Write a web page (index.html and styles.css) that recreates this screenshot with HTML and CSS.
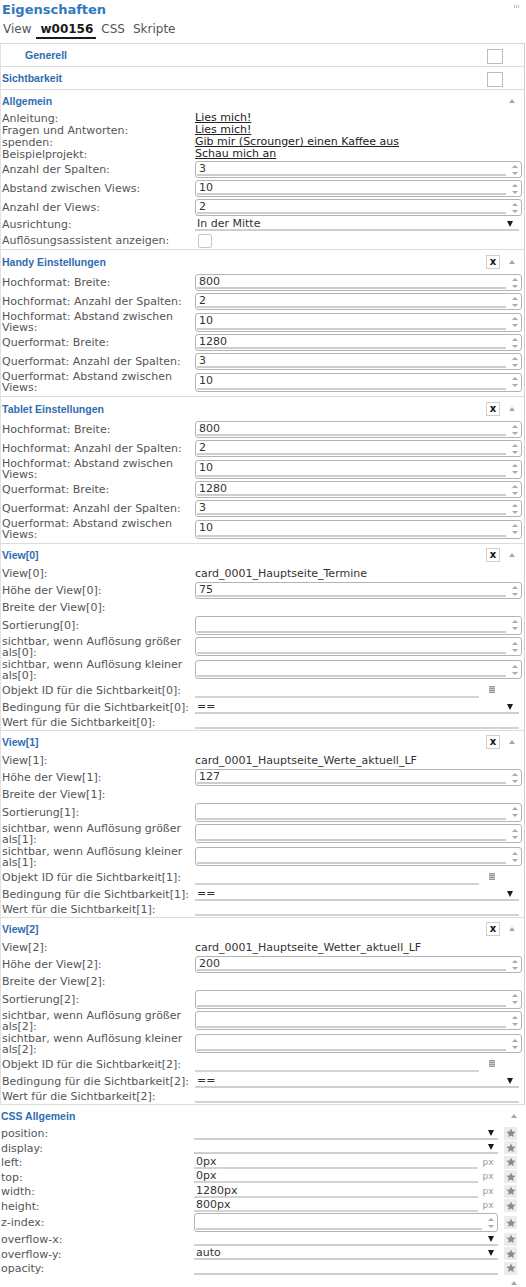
FILE: index.html
```html
<!DOCTYPE html>
<html lang="de">
<head>
<meta charset="utf-8">
<title>Eigenschaften</title>
<link rel="stylesheet" href="styles.css">
</head>
<body>
<div class="panel">
  <div class="titlebar"><h1 class="title">Eigenschaften</h1><span class="grip"></span></div>
  <div class="tabs">
    <span class="tab t-view">View</span><span class="tab active">w00156</span><span class="tab t-css">CSS</span><span class="tab t-skr">Skripte</span>
  </div>

  <div class="attrs">
    <div class="sec">
      <div class="head h22 indent"><span class="htext">Generell</span><span class="hchk"></span></div>
    </div>
    <div class="sec">
      <div class="head h22"><span class="htext">Sichtbarkeit</span><span class="hchk"></span></div>
    </div>

    <div class="sec">
      <div class="head h22"><span class="htext">Allgemein</span><span class="up"></span></div>
      <div class="row h12"><span class="lbl">Anleitung:</span><span class="link">Lies mich!</span></div>
      <div class="row h12"><span class="lbl">Fragen und Antworten:</span><span class="link">Lies mich!</span></div>
      <div class="row h12"><span class="lbl">spenden:</span><span class="link">Gib mir (Scrounger) einen Kaffee aus</span></div>
      <div class="row h12"><span class="lbl">Beispielprojekt:</span><span class="link">Schau mich an</span></div>
      <div class="row h19"><span class="lbl">Anzahl der Spalten:</span><div class="num"><span class="v">3</span><span class="spin"></span></div></div>
      <div class="row h19"><span class="lbl">Abstand zwischen Views:</span><div class="num"><span class="v">10</span><span class="spin"></span></div></div>
      <div class="row h19"><span class="lbl">Anzahl der Views:</span><div class="num"><span class="v">2</span><span class="spin"></span></div></div>
      <div class="row h15"><span class="lbl">Ausrichtung:</span><div class="sel wide"><span class="v">In der Mitte</span><span class="dn"></span></div></div>
      <div class="row h17"><span class="lbl">Auflösungsassistent anzeigen:</span><span class="chk"></span></div>
    </div>

    <div class="sec pb3">
      <div class="head h23"><span class="htext">Handy Einstellungen</span><span class="xbtn">x</span><span class="up"></span></div>
      <div class="row h19"><span class="lbl">Hochformat: Breite:</span><div class="num"><span class="v">800</span><span class="spin"></span></div></div>
      <div class="row h19"><span class="lbl">Hochformat: Anzahl der Spalten:</span><div class="num"><span class="v">2</span><span class="spin"></span></div></div>
      <div class="row h22"><span class="lbl">Hochformat: Abstand zwischen Views:</span><div class="num tall"><span class="v">10</span><span class="spin"></span></div></div>
      <div class="row h19"><span class="lbl">Querformat: Breite:</span><div class="num"><span class="v">1280</span><span class="spin"></span></div></div>
      <div class="row h19"><span class="lbl">Querformat: Anzahl der Spalten:</span><div class="num"><span class="v">3</span><span class="spin"></span></div></div>
      <div class="row h22"><span class="lbl">Querformat: Abstand zwischen Views:</span><div class="num tall"><span class="v">10</span><span class="spin"></span></div></div>
    </div>

    <div class="sec pb3">
      <div class="head h23"><span class="htext">Tablet Einstellungen</span><span class="xbtn">x</span><span class="up"></span></div>
      <div class="row h19"><span class="lbl">Hochformat: Breite:</span><div class="num"><span class="v">800</span><span class="spin"></span></div></div>
      <div class="row h19"><span class="lbl">Hochformat: Anzahl der Spalten:</span><div class="num"><span class="v">2</span><span class="spin"></span></div></div>
      <div class="row h22"><span class="lbl">Hochformat: Abstand zwischen Views:</span><div class="num tall"><span class="v">10</span><span class="spin"></span></div></div>
      <div class="row h19"><span class="lbl">Querformat: Breite:</span><div class="num"><span class="v">1280</span><span class="spin"></span></div></div>
      <div class="row h19"><span class="lbl">Querformat: Anzahl der Spalten:</span><div class="num"><span class="v">3</span><span class="spin"></span></div></div>
      <div class="row h22"><span class="lbl">Querformat: Abstand zwischen Views:</span><div class="num tall"><span class="v">10</span><span class="spin"></span></div></div>
    </div>

    <div class="sec">
      <div class="head h22"><span class="htext">View[0]</span><span class="xbtn">x</span><span class="up"></span></div>
      <div class="row h15"><span class="lbl">View[0]:</span><span class="txt">card_0001_Hauptseite_Termine</span></div>
      <div class="row h19"><span class="lbl">Höhe der View[0]:</span><div class="num"><span class="v">75</span><span class="spin"></span></div></div>
      <div class="row h15"><span class="lbl">Breite der View[0]:</span><span></span></div>
      <div class="row h20"><span class="lbl">Sortierung[0]:</span><div class="num tall"><span class="v"></span><span class="spin"></span></div></div>
      <div class="row h23"><span class="lbl">sichtbar, wenn Auflösung größer als[0]:</span><div class="num tall"><span class="v"></span><span class="spin"></span></div></div>
      <div class="row h23"><span class="lbl">sichtbar, wenn Auflösung kleiner als[0]:</span><div class="num tall"><span class="v"></span><span class="spin"></span></div></div>
      <div class="row h19"><span class="lbl">Objekt ID für die Sichtbarkeit[0]:</span><div class="idf"><span class="line"></span><span class="idicon"></span></div></div>
      <div class="row h15"><span class="lbl">Bedingung für die Sichtbarkeit[0]:</span><div class="sel wide"><span class="v">==</span><span class="dn"></span></div></div>
      <div class="row h15"><span class="lbl">Wert für die Sichtbarkeit[0]:</span><div class="line full"></div></div>
    </div>

    <div class="sec">
      <div class="head h22"><span class="htext">View[1]</span><span class="xbtn">x</span><span class="up"></span></div>
      <div class="row h15"><span class="lbl">View[1]:</span><span class="txt">card_0001_Hauptseite_Werte_aktuell_LF</span></div>
      <div class="row h19"><span class="lbl">Höhe der View[1]:</span><div class="num"><span class="v">127</span><span class="spin"></span></div></div>
      <div class="row h15"><span class="lbl">Breite der View[1]:</span><span></span></div>
      <div class="row h20"><span class="lbl">Sortierung[1]:</span><div class="num tall"><span class="v"></span><span class="spin"></span></div></div>
      <div class="row h23"><span class="lbl">sichtbar, wenn Auflösung größer als[1]:</span><div class="num tall"><span class="v"></span><span class="spin"></span></div></div>
      <div class="row h23"><span class="lbl">sichtbar, wenn Auflösung kleiner als[1]:</span><div class="num tall"><span class="v"></span><span class="spin"></span></div></div>
      <div class="row h19"><span class="lbl">Objekt ID für die Sichtbarkeit[1]:</span><div class="idf"><span class="line"></span><span class="idicon"></span></div></div>
      <div class="row h15"><span class="lbl">Bedingung für die Sichtbarkeit[1]:</span><div class="sel wide"><span class="v">==</span><span class="dn"></span></div></div>
      <div class="row h15"><span class="lbl">Wert für die Sichtbarkeit[1]:</span><div class="line full"></div></div>
    </div>

    <div class="sec">
      <div class="head h22"><span class="htext">View[2]</span><span class="xbtn">x</span><span class="up"></span></div>
      <div class="row h15"><span class="lbl">View[2]:</span><span class="txt">card_0001_Hauptseite_Wetter_aktuell_LF</span></div>
      <div class="row h19"><span class="lbl">Höhe der View[2]:</span><div class="num"><span class="v">200</span><span class="spin"></span></div></div>
      <div class="row h15"><span class="lbl">Breite der View[2]:</span><span></span></div>
      <div class="row h20"><span class="lbl">Sortierung[2]:</span><div class="num tall"><span class="v"></span><span class="spin"></span></div></div>
      <div class="row h23"><span class="lbl">sichtbar, wenn Auflösung größer als[2]:</span><div class="num tall"><span class="v"></span><span class="spin"></span></div></div>
      <div class="row h23"><span class="lbl">sichtbar, wenn Auflösung kleiner als[2]:</span><div class="num tall"><span class="v"></span><span class="spin"></span></div></div>
      <div class="row h19"><span class="lbl">Objekt ID für die Sichtbarkeit[2]:</span><div class="idf"><span class="line"></span><span class="idicon"></span></div></div>
      <div class="row h15"><span class="lbl">Bedingung für die Sichtbarkeit[2]:</span><div class="sel wide"><span class="v">==</span><span class="dn"></span></div></div>
      <div class="row h15"><span class="lbl">Wert für die Sichtbarkeit[2]:</span><div class="line full"></div></div>
    </div>
  </div>

  <div class="css-attrs">
    <div class="head h21"><span class="htext">CSS Allgemein</span><span class="up"></span></div>
    <div class="row h15"><span class="lbl">position:</span><div class="cv"><div class="sel"><span class="v"></span><span class="dn"></span></div><span class="star"><svg width="10" height="10" viewBox="0 0 10 10"><path d="M5 .4l1.4 3 3.2.3-2.4 2.2.7 3.2L5 7.5 2.1 9.1l.7-3.2L.4 3.7l3.2-.3z" fill="#8c8c8c"/></svg></span></div></div>
    <div class="row h14"><span class="lbl">display:</span><div class="cv"><div class="sel"><span class="v"></span><span class="dn"></span></div><span class="star"><svg width="10" height="10" viewBox="0 0 10 10"><path d="M5 .4l1.4 3 3.2.3-2.4 2.2.7 3.2L5 7.5 2.1 9.1l.7-3.2L.4 3.7l3.2-.3z" fill="#8c8c8c"/></svg></span></div></div>
    <div class="row h15"><span class="lbl">left:</span><div class="cv"><div class="pxf"><span class="line v">0px</span><span class="px">px</span></div><span class="star"><svg width="10" height="10" viewBox="0 0 10 10"><path d="M5 .4l1.4 3 3.2.3-2.4 2.2.7 3.2L5 7.5 2.1 9.1l.7-3.2L.4 3.7l3.2-.3z" fill="#8c8c8c"/></svg></span></div></div>
    <div class="row h14"><span class="lbl">top:</span><div class="cv"><div class="pxf"><span class="line v">0px</span><span class="px">px</span></div><span class="star"><svg width="10" height="10" viewBox="0 0 10 10"><path d="M5 .4l1.4 3 3.2.3-2.4 2.2.7 3.2L5 7.5 2.1 9.1l.7-3.2L.4 3.7l3.2-.3z" fill="#8c8c8c"/></svg></span></div></div>
    <div class="row h15"><span class="lbl">width:</span><div class="cv"><div class="pxf"><span class="line v">1280px</span><span class="px">px</span></div><span class="star"><svg width="10" height="10" viewBox="0 0 10 10"><path d="M5 .4l1.4 3 3.2.3-2.4 2.2.7 3.2L5 7.5 2.1 9.1l.7-3.2L.4 3.7l3.2-.3z" fill="#8c8c8c"/></svg></span></div></div>
    <div class="row h14"><span class="lbl">height:</span><div class="cv"><div class="pxf"><span class="line v">800px</span><span class="px">px</span></div><span class="star"><svg width="10" height="10" viewBox="0 0 10 10"><path d="M5 .4l1.4 3 3.2.3-2.4 2.2.7 3.2L5 7.5 2.1 9.1l.7-3.2L.4 3.7l3.2-.3z" fill="#8c8c8c"/></svg></span></div></div>
    <div class="row h19"><span class="lbl">z-index:</span><div class="cv mid"><div class="num tall"><span class="v"></span><span class="spin"></span></div><span class="star"><svg width="10" height="10" viewBox="0 0 10 10"><path d="M5 .4l1.4 3 3.2.3-2.4 2.2.7 3.2L5 7.5 2.1 9.1l.7-3.2L.4 3.7l3.2-.3z" fill="#8c8c8c"/></svg></span></div></div>
    <div class="row h15"><span class="lbl">overflow-x:</span><div class="cv"><div class="sel"><span class="v"></span><span class="dn"></span></div><span class="star"><svg width="10" height="10" viewBox="0 0 10 10"><path d="M5 .4l1.4 3 3.2.3-2.4 2.2.7 3.2L5 7.5 2.1 9.1l.7-3.2L.4 3.7l3.2-.3z" fill="#8c8c8c"/></svg></span></div></div>
    <div class="row h14"><span class="lbl">overflow-y:</span><div class="cv"><div class="sel"><span class="v">auto</span><span class="dn"></span></div><span class="star"><svg width="10" height="10" viewBox="0 0 10 10"><path d="M5 .4l1.4 3 3.2.3-2.4 2.2.7 3.2L5 7.5 2.1 9.1l.7-3.2L.4 3.7l3.2-.3z" fill="#8c8c8c"/></svg></span></div></div>
    <div class="row h15"><span class="lbl">opacity:</span><div class="cv"><div class="sel"><span class="v"></span></div><span class="star"><svg width="10" height="10" viewBox="0 0 10 10"><path d="M5 .4l1.4 3 3.2.3-2.4 2.2.7 3.2L5 7.5 2.1 9.1l.7-3.2L.4 3.7l3.2-.3z" fill="#8c8c8c"/></svg></span></div></div>
    <div class="head h21 top"><span class="htext"></span><span class="up"></span></div>
  </div>
</div>
</body>
</html>
```

FILE: styles.css
```css
* { box-sizing: border-box; }
html, body { margin: 0; padding: 0; background: #fff; }
body {
  font-family: "DejaVu Sans", Verdana, sans-serif;
  font-size: 11px;
  color: #333;
  width: 526px;
  height: 1287px;
  overflow: hidden;
}
.panel { width: 526px; }

.titlebar {
  height: 19px;
  display: flex;
  justify-content: space-between;
  align-items: center;
  padding: 0 6px 0 2px;
}
.title {
  margin: 0;
  font-size: 13px;
  font-weight: bold;
  color: #3378bd;
  line-height: 17px;
}
.grip {
  align-self: flex-start;
  margin-top: 5px;
  width: 6px;
  height: 3px;
  background: repeating-linear-gradient(90deg, #bdbdbd 0 1px, transparent 1px 2px);
}

.tabs {
  height: 24px;
  display: flex;
  align-items: flex-start;
  padding-top: 2px;
}
.tab { font-size: 12px; line-height: 16px; color: #555; }
.t-view { margin-left: 3px; }
.tab.active {
  margin-left: 5px;
  padding: 0 3px 0 4px;
  font-weight: bold;
  color: #1a1a1a;
  border-bottom: 2px solid #1a1a1a;
}
.t-css { margin-left: 5px; }
.t-skr { margin-left: 8px; }

.attrs {
  width: 525px;
  border-top: 1px solid #d6d6d6;
  border-left: 1px solid #e2e2e2;
  border-right: 1px solid #cdcdcd;
}
.sec { border-bottom: 1px solid #dcdcdc; }
.pb3 { padding-bottom: 3px; }

.head {
  display: flex;
  align-items: center;
  padding: 0 9px 0 1px;
}
.head.indent { padding-left: 24px; }
.htext {
  flex: 1;
  font-family: "Liberation Sans", Arial, sans-serif;
  font-size: 10.5px;
  font-weight: bold;
  color: #2f6db0;
}
.h21 { height: 21px; }
.h22 { height: 22px; }
.h23 { height: 23px; }
.hchk {
  width: 16px;
  height: 15px;
  border: 1px solid #bdbdbd;
  margin-right: 12px;
  margin-top: 2px;
}
.xbtn {
  width: 14px;
  height: 14px;
  border: 1px solid #cfcfcf;
  font-size: 10px;
  font-weight: bold;
  line-height: 11px;
  text-align: center;
  color: #111;
  margin-right: 9px;
}
.up {
  width: 0;
  height: 0;
  border-left: 3px solid transparent;
  border-right: 3px solid transparent;
  border-bottom: 4px solid #a6a6a6;
}

.row {
  display: grid;
  grid-template-columns: 193px 1fr;
  align-items: center;
  padding: 0 2px 0 1px;
}
.h12 { height: 12px; }
.h14 { height: 14px; }
.h15 { height: 15px; }
.h17 { height: 17px; }
.h19 { height: 19px; }
.h20 { height: 20px; }

.lbl {
  color: #555;
  font-size: 11px;
  line-height: 11px;
  padding-right: 4px;
}
.link {
  font-size: 11px;
  line-height: 12px;
  color: #222;
  text-decoration: underline;
}
.txt {
  font-size: 11px;
  color: #333;
}

.num {
  height: 17px;
  border: 1px solid #b3b3b3;
  border-radius: 3px;
  display: flex;
  align-items: stretch;
  background: #fff;
}
.num.tall { height: 19px; }
.num .v {
  flex: 1;
  margin: 0 2px 1px 1px;
  border-bottom: 2px solid #cdcdcd;
  padding-left: 2px;
  font-size: 11px;
  line-height: 13px;
  color: #333;
}
.spin {
  width: 13px;
  display: flex;
  flex-direction: column;
  align-items: center;
  justify-content: center;
  gap: 4px;
}
.spin::before, .spin::after {
  content: "";
  width: 0;
  height: 0;
  border-left: 3px solid transparent;
  border-right: 3px solid transparent;
}
.spin::before { border-bottom: 3px solid #a9a9a9; }
.spin::after { border-top: 3px solid #a9a9a9; }

.sel {
  align-self: end;
  margin-bottom: 1px;
  height: 13px;
  display: flex;
  align-items: center;
  border-bottom: 2px solid #cfcfcf;
}
.sel.wide { margin-right: 3px; }
.sel .v {
  flex: 1;
  padding-left: 2px;
  font-size: 11px;
  line-height: 11px;
  color: #333;
}
.dn {
  width: 0;
  height: 0;
  border-left: 3px solid transparent;
  border-right: 3px solid transparent;
  border-top: 6px solid #1a1a1a;
  margin-right: 6px;
}

.chk {
  width: 14px;
  height: 14px;
  border: 1px solid #c8c8c8;
  border-radius: 2px;
  margin-left: 3px;
}

.line {
  display: block;
  height: 13px;
  border-bottom: 2px solid #d3d3d3;
}
.line.full {
  align-self: end;
  margin: 0 3px 1px 0;
}
.idf {
  align-self: end;
  display: flex;
  align-items: flex-end;
  margin-bottom: 2px;
}
.idf .line { flex: 1; }
.idicon {
  width: 6px;
  height: 7px;
  margin: 0 27px 5px 10px;
  background: repeating-linear-gradient(180deg, #9a9a9a 0 1px, #c9c9c9 1px 2px);
}

.css-attrs { width: 526px; }
.cv {
  display: flex;
  align-items: flex-end;
  align-self: stretch;
  padding-bottom: 1px;
}
.cv.mid { align-items: center; padding-bottom: 0; }
.cv .sel { flex: 1; align-self: auto; margin-bottom: 0; }
.cv .sel .dn { margin-right: 4px; }
.cv .num { flex: 1; }
.pxf { flex: 1; display: flex; align-items: flex-end; }
.pxf .line.v {
  flex: 1;
  padding-left: 2px;
  font-size: 11px;
  line-height: 11px;
  color: #333;
}
.px {
  width: 20px;
  text-align: center;
  font-size: 9px;
  color: #999;
  line-height: 13px;
}
.star {
  align-self: center;
  width: 13px;
  height: 13px;
  margin: 0 7px 0 6px;
  background: #ececec;
  display: flex;
  align-items: center;
  justify-content: center;
}
.head.top { align-items: flex-start; padding-top: 5px; }
```
